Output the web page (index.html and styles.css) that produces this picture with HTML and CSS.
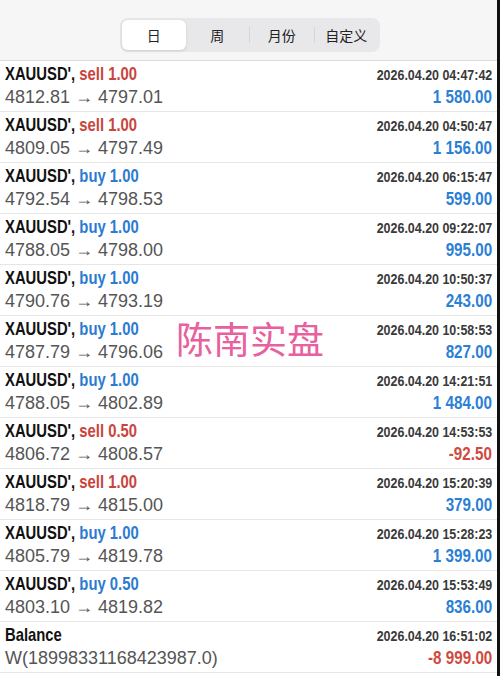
FILE: index.html
```html
<!DOCTYPE html>
<html lang="en">
  <head>
    <meta charset="UTF-8" />
    <meta name="viewport" content="width=device-width, initial-scale=1.0" />
    <title>History</title>
    <link rel="stylesheet" href="styles.css">
  </head>
  <body>
    <div class="screen">
      <!-- Period switcher -->
      <div class="header">
        <div class="segments">
          <span class="segment active">日</span>
          <span class="segment">周</span>
          <span class="segment divided">月份</span>
          <span class="segment divided">自定义</span>
        </div>
      </div>

      <!-- Deals list -->
      <ul class="deals">
        <li class="deal">
          <div class="line"><span class="title">XAUUSD', <span class="sell">sell 1.00</span></span><span class="time">2026.04.20 04:47:42</span></div>
          <div class="line"><span class="prices">4812.81 → 4797.01</span><span class="profit">1 580.00</span></div>
        </li>
        <li class="deal">
          <div class="line"><span class="title">XAUUSD', <span class="sell">sell 1.00</span></span><span class="time">2026.04.20 04:50:47</span></div>
          <div class="line"><span class="prices">4809.05 → 4797.49</span><span class="profit">1 156.00</span></div>
        </li>
        <li class="deal">
          <div class="line"><span class="title">XAUUSD', <span class="buy">buy 1.00</span></span><span class="time">2026.04.20 06:15:47</span></div>
          <div class="line"><span class="prices">4792.54 → 4798.53</span><span class="profit">599.00</span></div>
        </li>
        <li class="deal">
          <div class="line"><span class="title">XAUUSD', <span class="buy">buy 1.00</span></span><span class="time">2026.04.20 09:22:07</span></div>
          <div class="line"><span class="prices">4788.05 → 4798.00</span><span class="profit">995.00</span></div>
        </li>
        <li class="deal">
          <div class="line"><span class="title">XAUUSD', <span class="buy">buy 1.00</span></span><span class="time">2026.04.20 10:50:37</span></div>
          <div class="line"><span class="prices">4790.76 → 4793.19</span><span class="profit">243.00</span></div>
        </li>
        <li class="deal">
          <div class="line"><span class="title">XAUUSD', <span class="buy">buy 1.00</span></span><span class="time">2026.04.20 10:58:53</span></div>
          <div class="line"><span class="prices">4787.79 → 4796.06</span><span class="profit">827.00</span></div>
        </li>
        <li class="deal">
          <div class="line"><span class="title">XAUUSD', <span class="buy">buy 1.00</span></span><span class="time">2026.04.20 14:21:51</span></div>
          <div class="line"><span class="prices">4788.05 → 4802.89</span><span class="profit">1 484.00</span></div>
        </li>
        <li class="deal">
          <div class="line"><span class="title">XAUUSD', <span class="sell">sell 0.50</span></span><span class="time">2026.04.20 14:53:53</span></div>
          <div class="line"><span class="prices">4806.72 → 4808.57</span><span class="profit loss">-92.50</span></div>
        </li>
        <li class="deal">
          <div class="line"><span class="title">XAUUSD', <span class="sell">sell 1.00</span></span><span class="time">2026.04.20 15:20:39</span></div>
          <div class="line"><span class="prices">4818.79 → 4815.00</span><span class="profit">379.00</span></div>
        </li>
        <li class="deal">
          <div class="line"><span class="title">XAUUSD', <span class="buy">buy 1.00</span></span><span class="time">2026.04.20 15:28:23</span></div>
          <div class="line"><span class="prices">4805.79 → 4819.78</span><span class="profit">1 399.00</span></div>
        </li>
        <li class="deal">
          <div class="line"><span class="title">XAUUSD', <span class="buy">buy 0.50</span></span><span class="time">2026.04.20 15:53:49</span></div>
          <div class="line"><span class="prices">4803.10 → 4819.82</span><span class="profit">836.00</span></div>
        </li>
        <li class="deal">
          <div class="line"><span class="title">Balance</span><span class="time">2026.04.20 16:51:02</span></div>
          <div class="line"><span class="prices">W(18998331168423987.0)</span><span class="profit loss">-8 999.00</span></div>
        </li>
      </ul>

      <!-- Watermark -->
      <div class="watermark">陈南实盘</div>
    </div>
  </body>
</html>
```

FILE: styles.css
```css
* {
  box-sizing: border-box;
}
body {
  margin: 0;
  background-color: #fff;
  font-family: "Liberation Sans", Arial, sans-serif;
}
.screen {
  position: relative;
  width: 500px;
  height: 676px;
  overflow: hidden;
  border-right: 3px solid #111;
}
.header {
  height: 61px;
  padding-top: 18px;
  background-color: #f6f6f6;
  border-bottom: 1px solid #dcdcdc;
  display: flex;
  justify-content: center;
}
.segments {
  display: flex;
  width: 260px;
  height: 34px;
  padding: 2px;
  margin-left: 3px;
  background-color: #e8e8ea;
  border-radius: 8px;
  font-family: "Noto Sans CJK SC", sans-serif;
  font-size: 14px;
  color: #222;
}
.segment {
  flex: 1;
  display: flex;
  align-items: center;
  justify-content: center;
}
.segment.active {
  background-color: #fff;
  border-radius: 6px;
  box-shadow: 0 1px 3px rgba(0, 0, 0, 0.12);
}
.segment.divided {
  border-left: 1px solid #d6d6d8;
  margin: 7px 0;
}
.deals {
  list-style: none;
  margin: 0;
  padding: 0;
}
.deal {
  height: 51px;
  padding: 2px 5px 0 5px;
  border-bottom: 1px solid #e6e6e6;
}
.line {
  display: flex;
  justify-content: space-between;
  align-items: center;
}
.line:first-child {
  height: 22px;
}
.line:last-child {
  height: 24px;
}
/* condensed bold, like Helvetica Condensed */
.title,
.time,
.profit {
  display: inline-block;
  font-weight: bold;
}
.title {
  font-size: 19px;
  color: #111;
  transform: scaleX(0.78);
  transform-origin: left center;
}
.sell {
  color: #c9443c;
}
.buy {
  color: #2b7bd2;
}
.time {
  font-size: 15px;
  color: #3a3a3a;
  transform: scaleX(0.83);
  transform-origin: right center;
}
.prices {
  font-size: 18px;
  color: #555;
}
.profit {
  font-size: 19px;
  color: #2b7fd4;
  transform: scaleX(0.8);
  transform-origin: right center;
}
.profit.loss {
  color: #d04a3f;
}
.watermark {
  position: absolute;
  left: 176px;
  top: 314px;
  font-family: "Noto Sans CJK SC", sans-serif;
  font-size: 37px;
  line-height: 48px;
  color: #e8609d;
}
```
